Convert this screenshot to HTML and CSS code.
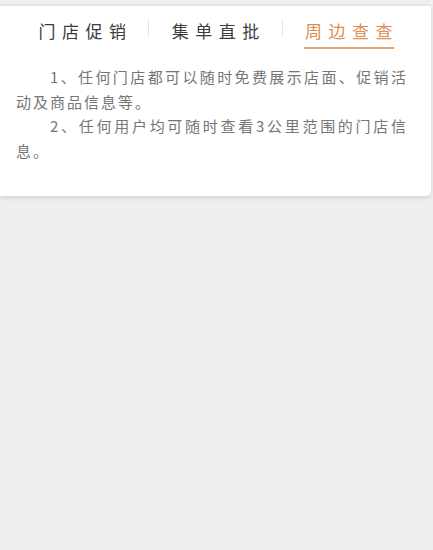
FILE: index.html
```html
<!DOCTYPE html>
<html lang="zh-CN">
<head>
<meta charset="utf-8">
<title>周边查查</title>
<link rel="stylesheet" href="styles.css">
</head>
<body>
<div class="page">
  <div class="card">
    <nav class="tabs">
      <div class="tab"><span class="tab-label">门店促销</span></div>
      <span class="tab-sep"></span>
      <div class="tab"><span class="tab-label">集单直批</span></div>
      <span class="tab-sep"></span>
      <div class="tab active"><span class="tab-label">周边查查</span></div>
    </nav>
    <div class="content">
      <p class="para">1、任何门店都可以随时免费展示店面、促销活动及商品信息等。</p>
      <p class="para">2、任何用户均可随时查看3公里范围的门店信息。</p>
    </div>
  </div>
</div>
</body>
</html>
```
FILE: styles.css
```css
html, body {
  margin: 0;
  padding: 0;
}
body {
  background: #efefef;
  font-family: "Noto Sans CJK SC", "Noto Sans", sans-serif;
  height: 550px;
}
.page {
  padding-top: 5px;
}
.card {
  margin-right: 2px;
  background: #ffffff;
  border-top: 1px solid #e2e2e2;
  border-bottom-right-radius: 5px;
  box-shadow: 0 2px 4px rgba(0, 0, 0, 0.13);
}
.tabs {
  display: flex;
  align-items: flex-start;
  padding: 14px 16px 0;
}
.tab {
  flex: 1;
  text-align: center;
  font-size: 17px;
  line-height: 22px;
  font-weight: 400;
  color: #3c3c3c;
}
.tab-label {
  display: inline-block;
  box-sizing: border-box;
  width: calc(4em + 3 * 6.5px + 2px);
  padding: 0 0 5px 1px;
  letter-spacing: 6.5px;
  white-space: nowrap;
  text-align: left;
  border-bottom: 2px solid transparent;
}
.tab.active {
  color: #dc8f52;
}
.tab.active .tab-label {
  border-bottom-color: #e5a36d;
}
.tab-sep {
  width: 1px;
  height: 18px;
  margin-top: -1px;
  background: #e3e3e3;
}
.content {
  padding: 16px 23px 33px 16px;
}
.para {
  margin: 0;
  font-size: 15px;
  line-height: 24.5px;
  letter-spacing: 2px;
  text-indent: 34px;
  text-align: justify;
  color: #767676;
}
```
